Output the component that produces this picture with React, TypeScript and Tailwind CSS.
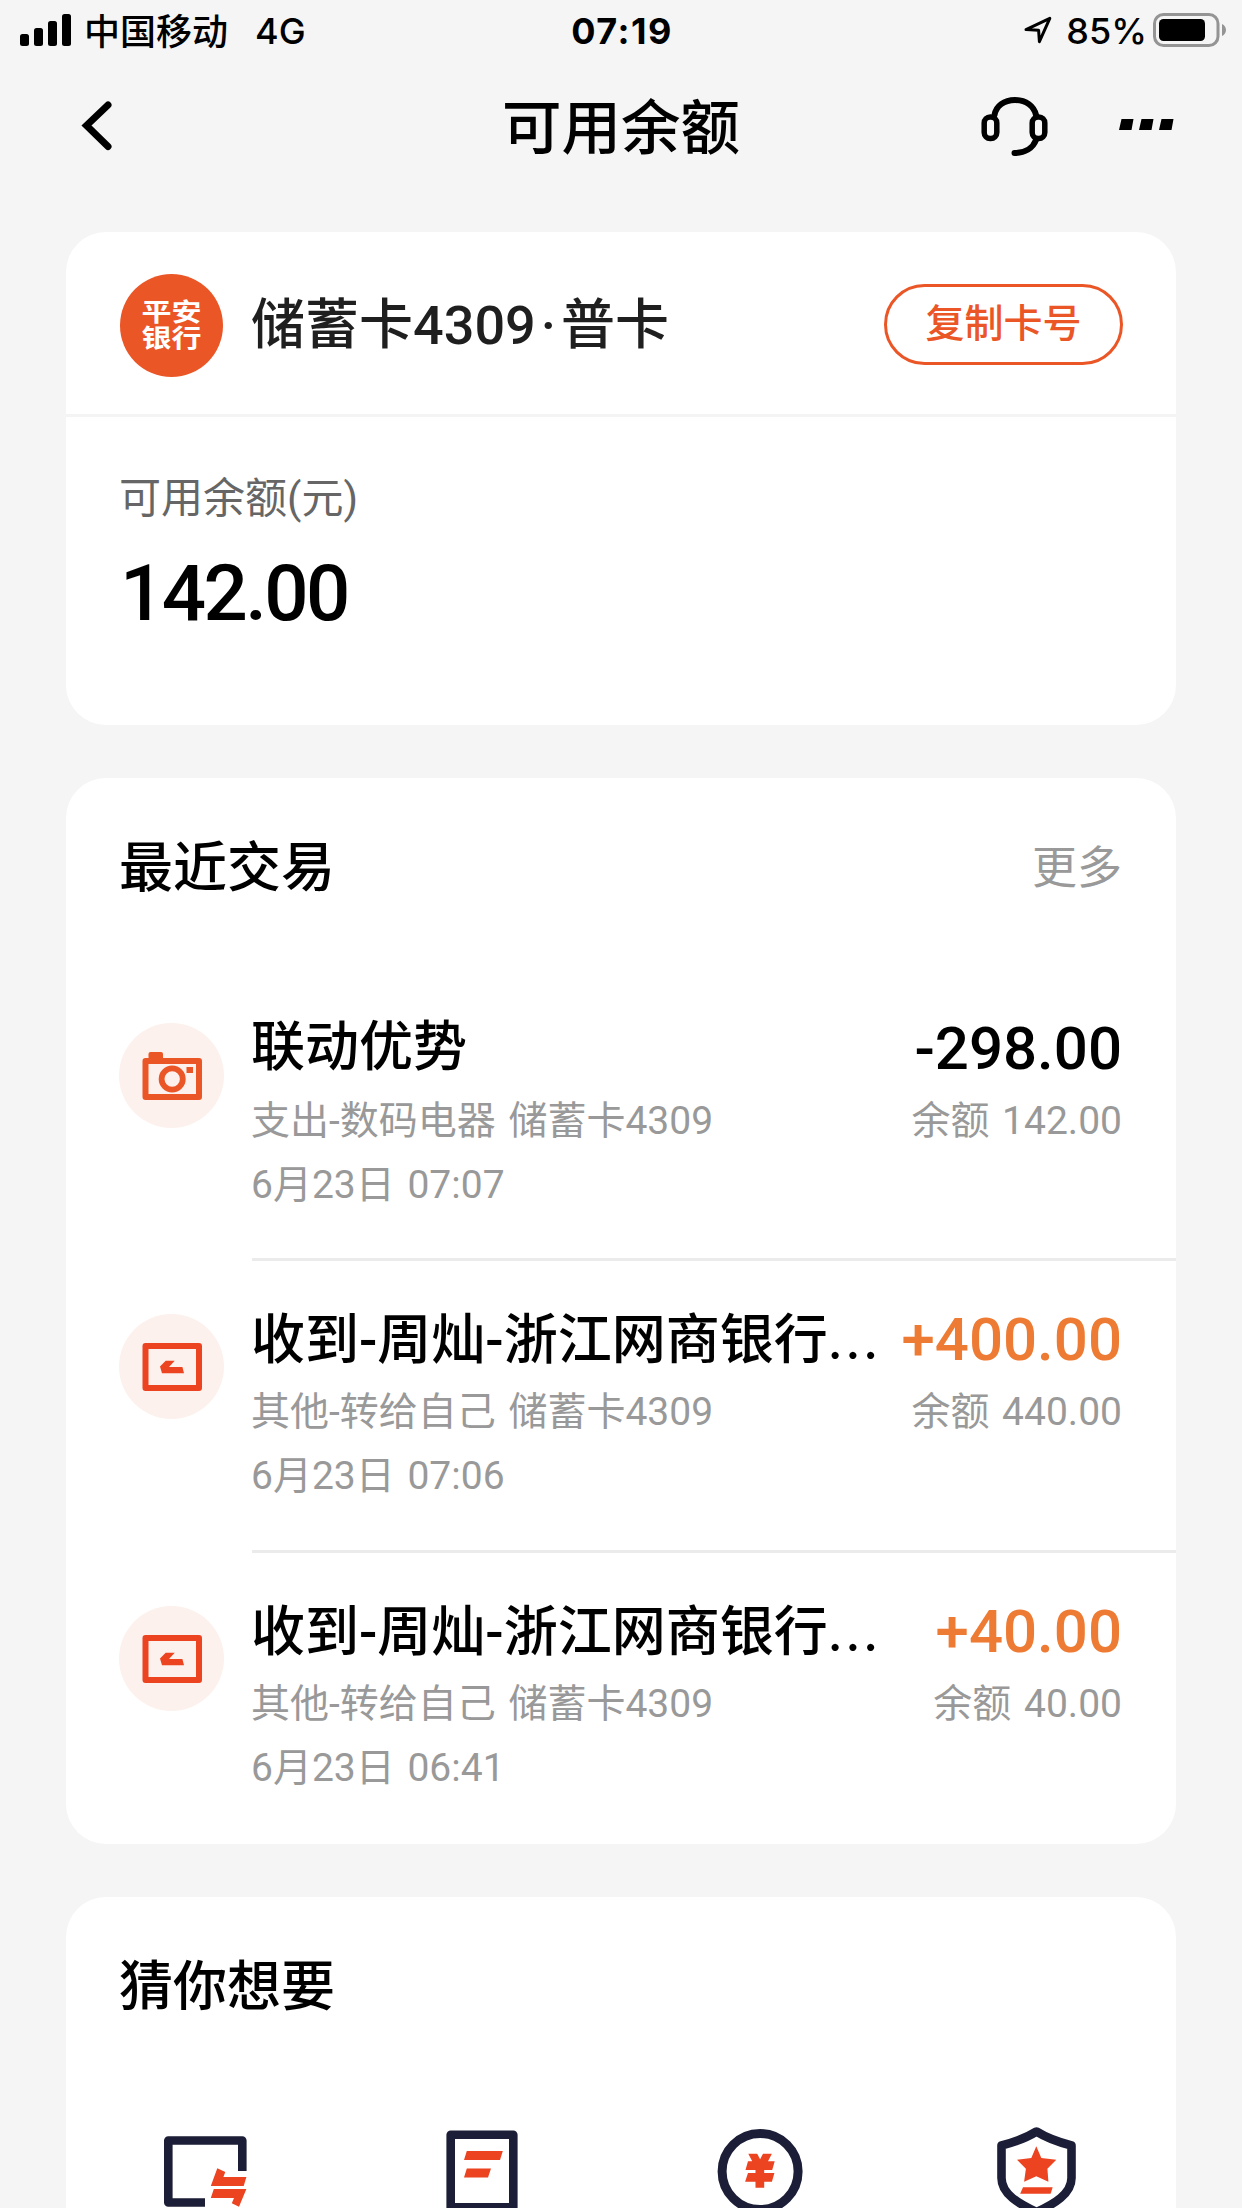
import React from 'react';

type Transaction = {
  name: string;
  truncated?: boolean;
  amount: string;
  detail: string;
  time: string;
  balance: string;
  kind: 'camera' | 'transfer';
};

const transactions: Transaction[] = [
  {
    name: '联动优势',
    amount: '-298.00',
    detail: '支出-数码电器 储蓄卡4309',
    time: '6月23日 07:07',
    balance: '余额 142.00',
    kind: 'camera',
  },
  {
    name: '收到-周灿-浙江网商银行',
    truncated: true,
    amount: '+400.00',
    detail: '其他-转给自己 储蓄卡4309',
    time: '6月23日 07:06',
    balance: '余额 440.00',
    kind: 'transfer',
  },
  {
    name: '收到-周灿-浙江网商银行',
    truncated: true,
    amount: '+40.00',
    detail: '其他-转给自己 储蓄卡4309',
    time: '6月23日 06:41',
    balance: '余额 40.00',
    kind: 'transfer',
  },
];

const StatusBar = () => (
  <div className="flex h-[62px] items-start pl-5 pr-4 pt-[13px] font-['Inter','Noto_Sans_CJK_SC',sans-serif] text-[36px] font-medium leading-[36px]">
    <div className="flex flex-1 items-start">
      <svg className="mt-px h-8 w-[51px]" viewBox="0 0 51 32">
        <rect x="0" y="20" width="9" height="12" rx="2.5" />
        <rect x="14" y="14" width="9" height="18" rx="2.5" />
        <rect x="28" y="7" width="9" height="25" rx="2.5" />
        <rect x="42" y="0" width="9" height="32" rx="2.5" />
      </svg>
      <span className="ml-[13px] pt-px">中国移动</span>
      <span className="ml-[27px]">4G</span>
    </div>
    <span className="mr-0.5 font-bold tracking-[1.5px]">07:19</span>
    <div className="flex flex-1 items-start justify-end">
      <svg className="mr-[14px] mt-[3px] h-7 w-7" viewBox="0 0 28 28" fill="none" stroke="#000" strokeWidth="3" strokeLinejoin="round">
        <path d="M2 13.6L25.8 2.4L15.4 25.6L14.6 14.2Z" />
      </svg>
      <span>85%</span>
      <svg className="ml-[6px] h-[34px] w-[73px]" viewBox="0 0 73 34">
        <rect x="1.500" y="1.500" width="63.500" height="31" rx="9" fill="none" stroke="#949494" strokeWidth="3" />
        <rect x="6" y="6" width="46" height="22" rx="4.500" />
        <path d="M69 11C71.500 12 73 14.500 73 17S71.500 22 69 23Z" fill="#949494" />
      </svg>
    </div>
  </div>
);

const Header = () => (
  <header className="flex h-[170px] items-start pl-[81px] pr-[67px] pt-[34px]">
    <div className="flex-1">
      <svg className="mt-[5px] h-[50px] w-[32px]" viewBox="0 0 32 50" fill="none" stroke="#000" strokeWidth="7" strokeLinecap="round">
        <path d="M27 4L5.500 24.500L27 45.500" />
      </svg>
    </div>
    <h1 className="mr-[14px] pt-[3px] text-[59.500px] font-medium leading-[60px]">可用余额</h1>
    <div className="flex flex-1 justify-end">
      <svg className="h-[61px] w-[68px]" viewBox="0 0 68 61" fill="none" stroke="#000" strokeLinecap="round">
        <path strokeWidth="6" d="M13.500 19C15 10 23 4 34 4S53 10 55 19" />
        <rect strokeWidth="5.500" x="3.200" y="21" width="12.600" height="21.500" rx="6" />
        <rect strokeWidth="5.500" x="51.200" y="21" width="12.600" height="21.500" rx="6" />
        <path strokeWidth="6" d="M55 44C52 52 44 57 33.500 57" />
      </svg>
      <svg className="ml-[70px] mt-[23px] h-[11px] w-[56px]" viewBox="0 0 56 11">
        <path d="M2.500 0H14.500L12.500 11H0Z M22.500 0H34.500L32.500 11H20Z M42.500 0H54.500L52.500 11H40Z" />
      </svg>
    </div>
  </header>
);

const CameraIcon = () => (
  <svg className="h-[105px] w-[105px]" viewBox="0 0 105 105" fill="none" stroke="#eb5627">
    <circle cx="52.500" cy="52.500" r="52.500" fill="#fcf1ec" stroke="none" />
    <path d="M29.500 36V31Q29.500 29 31.500 29H42Q44 29 44 31V36Z" fill="#eb5627" stroke="none" />
    <rect x="26.500" y="38" width="53.500" height="36" strokeWidth="6" strokeLinejoin="round" />
    <circle cx="53.200" cy="56" r="10.600" strokeWidth="5.800" />
    <rect x="67.500" y="44" width="6.500" height="6" fill="#eb5627" stroke="none" />
  </svg>
);

const TransferIcon = () => (
  <svg className="h-[105px] w-[105px]" viewBox="0 0 105 105">
    <circle cx="52.500" cy="52.500" r="52.500" fill="#fcf1ec" />
    <rect x="26.500" y="32" width="53.500" height="42" fill="none" stroke="#ec4321" strokeWidth="6" strokeLinejoin="round" />
    <path d="M46.700 46.700H55.700L50 53H63.400L65 59.300H43L41 52.500Z" fill="#ec4321" />
  </svg>
);

const TransactionRow = ({ item, first, last }: { item: Transaction; first: boolean; last: boolean }) => {
  const income = item.amount.startsWith('+');
  return (
    <div className={`flex pl-[53px] ${first ? 'h-[291px]' : 'h-[292px]'}`}>
      <div className="pt-[53px]">{item.kind === 'camera' ? <CameraIcon /> : <TransferIcon />}</div>
      <div className={`ml-7 flex flex-1 justify-between pr-[54px] pt-[48px] ${last ? '' : 'border-b-[3px] border-[#ebebeb]'}`}>
        <div className="-ml-px whitespace-nowrap text-[39px] text-[#999] [word-spacing:3px]">
          <div className="h-[60px] text-[54px] font-medium leading-[60px] text-black">
            {item.name}
            {item.truncated && <span className="ml-px font-['Lato'] tracking-[5px]">...</span>}
          </div>
          <div className="mt-[11px] h-[64px] leading-[64px]">{item.detail}</div>
          <div className="h-[64px] leading-[64px]">{item.time}</div>
        </div>
        <div className="whitespace-nowrap text-right text-[39px] text-[#999] [word-spacing:3px]">
          <div className={`h-[60px] text-[60px] font-medium leading-[61px] ${income ? 'text-[#ee7b33]' : 'text-black'}`}>
            {item.amount}
          </div>
          <div className="mt-[11px] h-[64px] leading-[64px]">{item.balance}</div>
        </div>
      </div>
    </div>
  );
};

const shortcuts = [
  <>
    <path d="M85.300 47V16.500H11.300V78.500H48" fill="none" stroke="#1b1e36" strokeWidth="8.600" strokeLinejoin="round" />
    <path d="M60.300 44.300L68.300 48L66.400 53H89.400L86.700 62H53.800Z" fill="#ec4321" />
    <path d="M56.800 65H89.400L82 82.700L74.800 79.300L77 74H53.800Z" fill="#ec4321" />
  </>,
  <>
    <rect x="16.700" y="10.800" width="62.600" height="72.500" fill="none" stroke="#1b1e36" strokeWidth="8.600" strokeLinejoin="round" />
    <path d="M32.800 27H68.800L66 36H30Z M32.800 44.500H57L54 53.500H30Z" fill="#ec4321" />
  </>,
  <g transform="translate(5.600 5)">
    <circle cx="42.500" cy="42.500" r="38" fill="none" stroke="#1b1e36" strokeWidth="9" />
    <path
      d="M30.700 24.700H39.600L42.500 30.300L45.400 24.700H54.300L50.400 32.300H57.100L54.600 41H46.600V44H56.800L54.300 52.700H46.600V58.700H37.900V52.700H27.500L30.400 44H37.900V41H27.900L30.400 32.300H34.600Z"
      fill="#ec4321"
    />
  </g>,
  <g transform="translate(8 2)">
    <path
      d="M39.500 5.500C30 11.500 20 15.500 4.500 19.500V52C4.500 68 22 78 39.500 86C57 78 74.500 68 74.500 52V19.500C59 15.500 49 11.500 39.500 5.500Z"
      fill="none"
      stroke="#1b1e36"
      strokeWidth="8.600"
      strokeLinejoin="round"
    />
    <path d="M39.300 20.300L44.300 32L59.300 33.700L50.400 42.700L51.400 55.700L39.300 50.300L27.100 55.700L28.900 42.700L20 33.700L34.300 32Z" fill="#ec4321" />
    <path d="M26 61.300H55.700L53.600 67.700H23.200Z" fill="#ec4321" />
  </g>,
];

const App = () => {
  return (
    <div className="h-[2208px] w-[1242px] overflow-hidden bg-[#f5f5f5] font-['Roboto','Noto_Sans_CJK_SC',sans-serif] text-black">
      <StatusBar />
      <Header />

      <main className="flex flex-col gap-[53px] px-[66px]">
        {/* Card and balance */}
        <section className="h-[493px] rounded-[40px] bg-white">
          <div className="flex h-[185px] items-center border-b-[3px] border-[#f4f4f4] pl-[54px] pr-[53px] pt-1">
            <div className="flex h-[103px] w-[103px] flex-col items-center justify-center rounded-full bg-[#eb5627] text-[30px] font-bold text-white">
              <div className="h-[26px] scale-y-[0.85] leading-[26px]">平安</div>
              <div className="h-[26px] scale-y-[0.85] leading-[26px]">银行</div>
            </div>
            <span className="ml-[28px] flex-1 pt-0.5 text-[54px] font-medium leading-[60px] text-[#1f1f1f]">
              储蓄卡4309<span className="mx-[5px]">·</span>普卡
            </span>
            <button className="mb-0.5 h-[81px] w-[239px] rounded-full border-[3px] border-[#eb5627] text-[39px] font-medium leading-[73px] text-[#eb5627]">
              复制卡号
            </button>
          </div>
          <div className="pl-[54px] pt-[52px]">
            <div className="-ml-px text-[42px] leading-[60px] text-[#666]">可用余额(元)</div>
            <div className="mt-[25px] text-[78px] font-medium leading-[80px] tracking-[-2.600px]">142.00</div>
          </div>
        </section>

        {/* Recent transactions */}
        <section className="h-[1066px] overflow-hidden rounded-[40px] bg-white">
          <div className="flex h-[192px] items-start justify-between pl-[53px] pr-[54px] pt-[61px]">
            <h2 className="text-[54px] font-medium leading-[60px]">最近交易</h2>
            <span className="text-[45px] leading-[60px] text-[#999]">更多</span>
          </div>
          {transactions.map((item, i) => (
            <TransactionRow key={i} item={item} first={i === 0} last={i === transactions.length - 1} />
          ))}
        </section>

        {/* Shortcuts */}
        <section className="h-[400px] rounded-[40px] bg-white">
          <h2 className="h-[227px] pl-[53px] pt-[61px] text-[54px] font-medium leading-[60px]">猜你想要</h2>
          <div className="grid grid-cols-4 justify-items-center">
            {shortcuts.map((icon, i) => (
              <svg key={i} className="h-24 w-24" viewBox="0 0 96 96">
                {icon}
              </svg>
            ))}
          </div>
        </section>
      </main>
    </div>
  );
};

export default App;
